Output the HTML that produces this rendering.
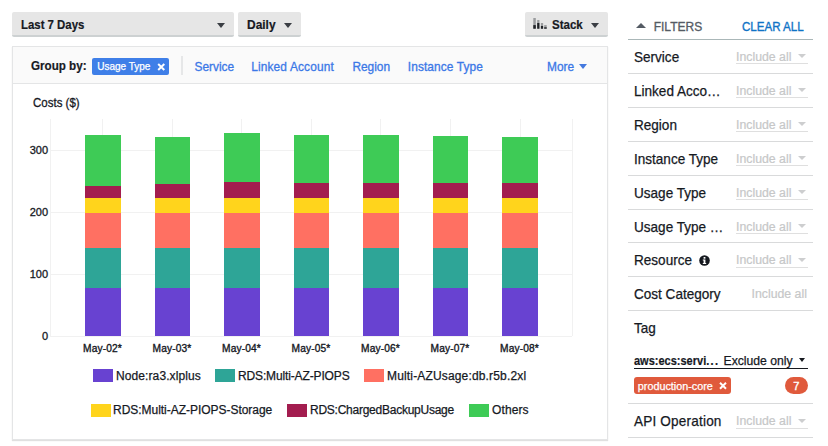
<!DOCTYPE html>
<html><head><meta charset="utf-8">
<style>
*{box-sizing:border-box;margin:0;padding:0}
html,body{width:828px;height:446px;overflow:hidden;background:#fff;font-family:"Liberation Sans",sans-serif;color:#16191f}
.a{position:absolute;white-space:nowrap}
.btn{position:absolute;background:#e6e6e6;border-radius:2px;border-bottom:2px solid #cdd1d2}
.bt{position:absolute;font-weight:bold;font-size:12px;line-height:14px;color:#16191f;-webkit-text-stroke:0.2px #16191f}
.tri{position:absolute;width:0;height:0;border-left:4px solid transparent;border-right:4px solid transparent;border-top:5px solid #3a3e44}
.panel{position:absolute;left:12px;top:46px;width:596px;height:394px;border:1px solid #e4e5e6;box-shadow:0 1px 1px rgba(0,0,0,.12)}
.gb{position:absolute;left:0;top:0;width:594px;height:37px;background:#fafafa;border-bottom:1px solid #e4e5e6}
.lnk{position:absolute;font-size:11.9px;line-height:14px;color:#3b78e7;top:60px;-webkit-text-stroke:0.3px #3b78e7}
.grid{position:absolute;background:#f1f1f1}
.bar{position:absolute;width:35.5px}
.yl{position:absolute;font-size:11px;line-height:12px;text-align:right;width:30px;left:18px;-webkit-text-stroke:0.3px #16191f}
.xl{position:absolute;font-size:10.2px;letter-spacing:0.15px;line-height:12px;text-align:center;width:60px;top:343px;-webkit-text-stroke:0.35px #16191f}
.sw{position:absolute;width:20px;height:13px}
.lg{position:absolute;font-size:12px;line-height:14px;-webkit-text-stroke:0.25px #16191f}
.fl{position:absolute;left:628px;width:185px;height:1px;background:#d9dadb}
.ft{position:absolute;left:634px;font-size:14.2px;line-height:16px;color:#16191f;-webkit-text-stroke:0.25px #16191f;transform:scaleX(0.955);transform-origin:0 0}
.inc{position:absolute;left:736px;width:72px;height:16px;border-bottom:1px solid #dfdfdf;font-size:12.3px;line-height:18px;color:#c6c7c8;-webkit-text-stroke:0.2px #c6c7c8}
.inc .tri{border-top-color:#cdcecf;border-left-width:4px;border-right-width:4px;border-top-width:4.5px;left:61.5px;top:6px}
</style></head><body>

<!-- top buttons -->
<div class="btn" style="left:12px;top:12px;width:222px;height:25px"></div>
<div class="bt" style="left:21px;top:18.4px;font-size:12.2px;transform:scaleX(0.935);transform-origin:0 0">Last 7 Days</div>
<div class="tri" style="left:217px;top:22.5px"></div>

<div class="btn" style="left:238px;top:12px;width:63px;height:25px"></div>
<div class="bt" style="left:247px;top:18.2px;font-size:12.2px;transform:scaleX(0.98);transform-origin:0 0">Daily</div>
<div class="tri" style="left:284px;top:22.5px"></div>

<div class="btn" style="left:525px;top:12px;width:83px;height:25px"></div>
<svg class="a" style="left:533px;top:18px" width="14" height="11" viewBox="0 0 14 11">
<rect x="0.3" y="0" width="2.5" height="10.7" fill="#9a9c9e"/><rect x="0.3" y="7.1" width="2.5" height="3.6" fill="#1f2226"/>
<rect x="4.2" y="2" width="2.2" height="8.7" fill="#9a9c9e"/><rect x="4.2" y="5" width="2.2" height="5.7" fill="#1f2226"/>
<rect x="7.9" y="5" width="2.2" height="5.7" fill="#9a9c9e"/><rect x="7.9" y="8" width="2.2" height="2.7" fill="#1f2226"/>
<rect x="11.2" y="7.1" width="2.5" height="3.6" fill="#9a9c9e"/><rect x="11.2" y="9.3" width="2.5" height="1.4" fill="#1f2226"/>
</svg>
<div class="bt" style="left:551.7px;top:18.1px;font-size:12.2px;transform:scaleX(0.945);transform-origin:0 0">Stack</div>
<div class="tri" style="left:591px;top:22.5px"></div>

<!-- panel -->
<div class="panel"><div class="gb"></div></div>
<div class="bt" style="left:31px;top:58.6px;font-size:12.3px;transform:scaleX(0.945);transform-origin:0 0">Group by:</div>
<div class="a" style="left:92px;top:57.5px;width:77px;height:17px;background:#3f7fe8;border-radius:2px"></div>
<div class="a" style="left:97.2px;top:60.2px;font-size:10px;line-height:14px;color:#fff;-webkit-text-stroke:0.25px #fff">Usage Type</div>
<svg class="a" style="left:156.5px;top:63px" width="8.5" height="8" viewBox="0 0 8.5 8"><path d="M1.2 1L7.3 7M7.3 1L1.2 7" stroke="#fff" stroke-width="2" stroke-linecap="butt"/></svg>
<div class="a" style="left:181px;top:55.7px;width:2px;height:19px;background:#e6e7e8"></div>
<div class="lnk" style="left:194.5px">Service</div>
<div class="lnk" style="left:251.2px;letter-spacing:0.15px">Linked Account</div>
<div class="lnk" style="left:352.4px">Region</div>
<div class="lnk" style="left:407.8px;letter-spacing:0.1px">Instance Type</div>
<div class="lnk" style="left:547px">More</div>
<div class="tri" style="left:579px;top:63.6px;border-top-color:#4479de;border-left-width:4px;border-right-width:4px;border-top-width:5px"></div>

<div class="a" style="left:33.3px;top:95.5px;font-size:12.5px;line-height:14px;-webkit-text-stroke:0.3px #16191f;transform:scaleX(0.92);transform-origin:0 0">Costs ($)</div>

<!-- chart grid -->
<div class="grid" style="left:50px;top:150px;width:522px;height:1px"></div>
<div class="grid" style="left:50px;top:212px;width:522px;height:1px"></div>
<div class="grid" style="left:50px;top:274px;width:522px;height:1px"></div>
<div class="grid" style="left:50px;top:336px;width:522px;height:1px"></div>
<div class="grid" style="left:50px;top:119px;width:1px;height:217px"></div>
<div class="grid" style="left:102px;top:119px;width:1px;height:217px"></div>
<div class="grid" style="left:172px;top:119px;width:1px;height:217px"></div>
<div class="grid" style="left:241px;top:119px;width:1px;height:217px"></div>
<div class="grid" style="left:311px;top:119px;width:1px;height:217px"></div>
<div class="grid" style="left:380px;top:119px;width:1px;height:217px"></div>
<div class="grid" style="left:450px;top:119px;width:1px;height:217px"></div>
<div class="grid" style="left:520px;top:119px;width:1px;height:217px"></div>
<div class="grid" style="left:572px;top:119px;width:1px;height:217px"></div>

<div class="yl" style="top:144px">300</div>
<div class="yl" style="top:206px">200</div>
<div class="yl" style="top:268px">100</div>
<div class="yl" style="top:330px">0</div>

<div id="bars">
<div class="bar" style="left:85.0px;top:135.1px;height:51.3px;background:#3ecb56"></div>
<div class="bar" style="left:85.0px;top:186.4px;height:11.6px;background:#a31d4f"></div>
<div class="bar" style="left:85.0px;top:198px;height:14.8px;background:#ffd41c"></div>
<div class="bar" style="left:85.0px;top:212.8px;height:35.2px;background:#ff7062"></div>
<div class="bar" style="left:85.0px;top:248px;height:40.0px;background:#2ea597"></div>
<div class="bar" style="left:85.0px;top:288px;height:48.0px;background:#6842d1"></div>
<div class="bar" style="left:154.5px;top:136.8px;height:47.3px;background:#3ecb56"></div>
<div class="bar" style="left:154.5px;top:184.1px;height:13.9px;background:#a31d4f"></div>
<div class="bar" style="left:154.5px;top:198px;height:14.8px;background:#ffd41c"></div>
<div class="bar" style="left:154.5px;top:212.8px;height:35.2px;background:#ff7062"></div>
<div class="bar" style="left:154.5px;top:248px;height:40.0px;background:#2ea597"></div>
<div class="bar" style="left:154.5px;top:288px;height:48.0px;background:#6842d1"></div>
<div class="bar" style="left:224.0px;top:133.3px;height:49.0px;background:#3ecb56"></div>
<div class="bar" style="left:224.0px;top:182.3px;height:15.7px;background:#a31d4f"></div>
<div class="bar" style="left:224.0px;top:198px;height:14.8px;background:#ffd41c"></div>
<div class="bar" style="left:224.0px;top:212.8px;height:35.2px;background:#ff7062"></div>
<div class="bar" style="left:224.0px;top:248px;height:40.0px;background:#2ea597"></div>
<div class="bar" style="left:224.0px;top:288px;height:48.0px;background:#6842d1"></div>
<div class="bar" style="left:293.5px;top:135.1px;height:47.5px;background:#3ecb56"></div>
<div class="bar" style="left:293.5px;top:182.6px;height:15.4px;background:#a31d4f"></div>
<div class="bar" style="left:293.5px;top:198px;height:14.8px;background:#ffd41c"></div>
<div class="bar" style="left:293.5px;top:212.8px;height:35.2px;background:#ff7062"></div>
<div class="bar" style="left:293.5px;top:248px;height:40.0px;background:#2ea597"></div>
<div class="bar" style="left:293.5px;top:288px;height:48.0px;background:#6842d1"></div>
<div class="bar" style="left:363.0px;top:135.1px;height:47.9px;background:#3ecb56"></div>
<div class="bar" style="left:363.0px;top:183px;height:15.0px;background:#a31d4f"></div>
<div class="bar" style="left:363.0px;top:198px;height:14.8px;background:#ffd41c"></div>
<div class="bar" style="left:363.0px;top:212.8px;height:35.2px;background:#ff7062"></div>
<div class="bar" style="left:363.0px;top:248px;height:40.0px;background:#2ea597"></div>
<div class="bar" style="left:363.0px;top:288px;height:48.0px;background:#6842d1"></div>
<div class="bar" style="left:432.5px;top:136.2px;height:46.8px;background:#3ecb56"></div>
<div class="bar" style="left:432.5px;top:183px;height:15.0px;background:#a31d4f"></div>
<div class="bar" style="left:432.5px;top:198px;height:14.8px;background:#ffd41c"></div>
<div class="bar" style="left:432.5px;top:212.8px;height:35.2px;background:#ff7062"></div>
<div class="bar" style="left:432.5px;top:248px;height:40.0px;background:#2ea597"></div>
<div class="bar" style="left:432.5px;top:288px;height:48.0px;background:#6842d1"></div>
<div class="bar" style="left:502.0px;top:136.6px;height:46.0px;background:#3ecb56"></div>
<div class="bar" style="left:502.0px;top:182.6px;height:15.4px;background:#a31d4f"></div>
<div class="bar" style="left:502.0px;top:198px;height:14.8px;background:#ffd41c"></div>
<div class="bar" style="left:502.0px;top:212.8px;height:35.2px;background:#ff7062"></div>
<div class="bar" style="left:502.0px;top:248px;height:40.0px;background:#2ea597"></div>
<div class="bar" style="left:502.0px;top:288px;height:48.0px;background:#6842d1"></div>
</div>

<div class="xl" style="left:72.5px">May-02*</div>
<div class="xl" style="left:142px">May-03*</div>
<div class="xl" style="left:211.5px">May-04*</div>
<div class="xl" style="left:281px">May-05*</div>
<div class="xl" style="left:350.5px">May-06*</div>
<div class="xl" style="left:420px">May-07*</div>
<div class="xl" style="left:489.5px">May-08*</div>

<!-- legend -->
<div class="sw" style="left:93px;top:369px;background:#6842d1"></div>
<div class="lg" style="left:116px;top:369px;letter-spacing:0.1px">Node:ra3.xlplus</div>
<div class="sw" style="left:215px;top:369px;background:#2ea597"></div>
<div class="lg" style="left:238px;top:369px;letter-spacing:-0.14px">RDS:Multi-AZ-PIOPS</div>
<div class="sw" style="left:364px;top:369px;background:#ff7062"></div>
<div class="lg" style="left:387px;top:369px;letter-spacing:0.16px">Multi-AZUsage:db.r5b.2xl</div>

<div class="sw" style="left:91px;top:404px;background:#ffd41c"></div>
<div class="lg" style="left:113px;top:403px;letter-spacing:-0.03px">RDS:Multi-AZ-PIOPS-Storage</div>
<div class="sw" style="left:287px;top:404px;background:#a31d4f"></div>
<div class="lg" style="left:310px;top:403px;letter-spacing:-0.25px">RDS:ChargedBackupUsage</div>
<div class="sw" style="left:469px;top:404px;background:#3ecb56"></div>
<div class="lg" style="left:492px;top:403px;letter-spacing:0.12px">Others</div>

<!-- filters -->
<div class="tri" style="left:636px;top:23.2px;border-top:none;border-left-width:5px;border-right-width:5px;border-bottom:5px solid #545b64"></div>
<div class="a" style="left:653.7px;top:20.2px;font-size:12px;line-height:14px;color:#545b64;-webkit-text-stroke:0.3px #545b64">FILTERS</div>
<div class="a" style="left:741.7px;top:20.2px;font-size:12.3px;line-height:14px;color:#0f73c6;letter-spacing:0;-webkit-text-stroke:0.35px #0f73c6;transform:scaleX(0.94);transform-origin:0 0">CLEAR ALL</div>
<div class="fl" style="top:39px;background:#aab7b8"></div>

<div class="ft" style="top:49px">Service</div>
<div class="inc" style="top:48px">Include all<span class="tri"></span></div>
<div class="fl" style="top:73px"></div>
<div class="ft" style="top:83px">Linked Acco…</div>
<div class="inc" style="top:82px">Include all<span class="tri"></span></div>
<div class="fl" style="top:107px"></div>
<div class="ft" style="top:117px">Region</div>
<div class="inc" style="top:116px">Include all<span class="tri"></span></div>
<div class="fl" style="top:141px"></div>
<div class="ft" style="top:151px">Instance Type</div>
<div class="inc" style="top:150px">Include all<span class="tri"></span></div>
<div class="fl" style="top:175px"></div>
<div class="ft" style="top:185px">Usage Type</div>
<div class="inc" style="top:184px">Include all<span class="tri"></span></div>
<div class="fl" style="top:209px"></div>
<div class="ft" style="top:219px">Usage Type …</div>
<div class="inc" style="top:218px">Include all<span class="tri"></span></div>
<div class="fl" style="top:242.4px"></div>
<div class="ft" style="top:252.2px">Resource</div>
<svg class="a" style="left:698.8px;top:255.2px" width="11" height="11" viewBox="0 0 11 11"><circle cx="5.5" cy="5.5" r="5.3" fill="#16191f"/><rect x="4.6" y="2" width="1.8" height="1.7" fill="#fff"/><path d="M3.8 4.5H6.4V7.9H7.2V8.9H3.8V7.9H4.6V5.5H3.8Z" fill="#fff"/></svg>
<div class="inc" style="top:251.6px;line-height:17px">Include all<span class="tri"></span></div>
<div class="fl" style="top:276px"></div>
<div class="ft" style="top:286.3px">Cost Category</div>
<div class="a" style="left:751.5px;top:286.5px;font-size:12.3px;line-height:15px;color:#c6c7c8;-webkit-text-stroke:0.2px #c6c7c8">Include all</div>
<div class="fl" style="top:310px"></div>
<div class="ft" style="top:320.3px">Tag</div>

<div class="a" style="left:634px;top:353.5px;font-size:12.8px;line-height:14px;font-weight:bold;transform:scaleX(0.86);transform-origin:0 0;-webkit-text-stroke:0.2px #16191f">aws:ecs:servi<span style="letter-spacing:1.5px">...</span></div>
<div class="a" style="left:723.5px;top:354px;font-size:12.2px;line-height:14px;-webkit-text-stroke:0.25px #16191f">Exclude only</div>
<div class="tri" style="left:798.5px;top:358.3px;border-left-width:3.6px;border-right-width:3.6px;border-top-width:4.3px;border-top-color:#16191f"></div>
<div class="a" style="left:634px;top:368px;width:174px;height:1px;background:#16191f"></div>

<div class="a" style="left:633.5px;top:377.3px;width:97.5px;height:17px;background:#e05a3c;border-radius:3px"></div>
<div class="a" style="left:637.8px;top:379.6px;font-size:10.8px;line-height:13px;color:#fff;-webkit-text-stroke:0.25px #fff">production-core</div>
<svg class="a" style="left:718.5px;top:382.2px" width="8" height="7.5" viewBox="0 0 8 7.5"><path d="M1 0.8L7 6.7M7 0.8L1 6.7" stroke="#fff" stroke-width="2"/></svg>
<div class="a" style="left:784.6px;top:377.3px;width:23.2px;height:17px;background:#e05a3c;border-radius:9px;color:#fff;font-size:11px;line-height:19px;text-align:center;-webkit-text-stroke:0.4px #fff">7</div>
<div class="fl" style="top:403px"></div>
<div class="ft" style="top:413px;letter-spacing:0.2px">API Operation</div>
<div class="inc" style="top:412.5px;line-height:17px">Include all<span class="tri"></span></div>
<div class="fl" style="top:437px"></div>

</body></html>
